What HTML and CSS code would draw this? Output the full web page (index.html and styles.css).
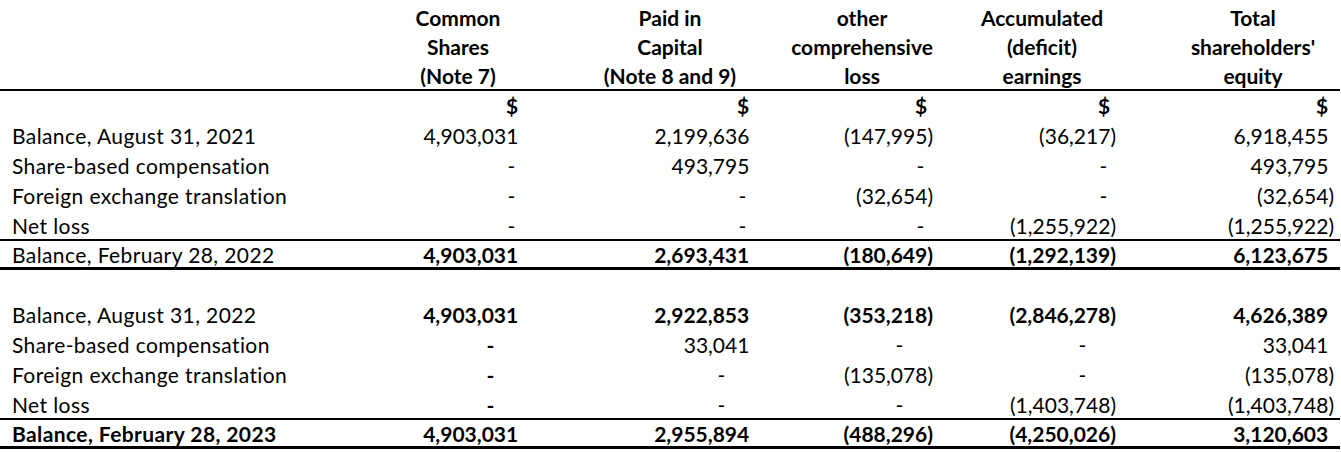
FILE: index.html
```html
<!DOCTYPE html>
<html>
<head>
<meta charset="utf-8">
<link rel="stylesheet" href="styles.css">
</head>
<body>
<div class="sheet">
  <div class="row head">
    <div class="c lab"></div>
    <div class="c c1">Common<br>Shares<br>(Note 7)</div>
    <div class="c c2">Paid in<br>Capital<br>(Note 8 and 9)</div>
    <div class="c c3">other<br>comprehensive<br>loss</div>
    <div class="c c4">Accumulated<br>(deficit)<br>earnings</div>
    <div class="c c5">Total<br>shareholders'<br>equity</div>
  </div>
  <div class="row cur b">
    <div class="c lab"></div>
    <div class="c c1 v">$<span class="p">)</span></div>
    <div class="c c2 v">$<span class="p">)</span></div>
    <div class="c c3 v">$<span class="p">)</span></div>
    <div class="c c4 v">$<span class="p">)</span></div>
    <div class="c c5 v">$<span class="p">)</span></div>
  </div>
  <div class="row">
    <div class="c lab">Balance, August 31, 2021</div>
    <div class="c c1 v">4,903,031<span class="p">)</span></div>
    <div class="c c2 v">2,199,636<span class="p">)</span></div>
    <div class="c c3 v">(147,995)</div>
    <div class="c c4 v">(36,217)</div>
    <div class="c c5 v">6,918,455<span class="p">)</span></div>
  </div>
  <div class="row">
    <div class="c lab">Share-based compensation</div>
    <div class="c c1 v"><span class="d1">-</span><span class="p">)</span></div>
    <div class="c c2 v">493,795<span class="p">)</span></div>
    <div class="c c3 v"><span class="d1">-</span><span class="p">)</span></div>
    <div class="c c4 v"><span class="d1">-</span><span class="p">)</span></div>
    <div class="c c5 v">493,795<span class="p">)</span></div>
  </div>
  <div class="row">
    <div class="c lab">Foreign exchange translation</div>
    <div class="c c1 v"><span class="d1">-</span><span class="p">)</span></div>
    <div class="c c2 v"><span class="d1">-</span><span class="p">)</span></div>
    <div class="c c3 v">(32,654)</div>
    <div class="c c4 v"><span class="d1">-</span><span class="p">)</span></div>
    <div class="c c5 v">(32,654)</div>
  </div>
  <div class="row pre">
    <div class="c lab">Net loss</div>
    <div class="c c1 v"><span class="d1">-</span><span class="p">)</span></div>
    <div class="c c2 v"><span class="d1">-</span><span class="p">)</span></div>
    <div class="c c3 v"><span class="d1">-</span><span class="p">)</span></div>
    <div class="c c4 v">(1,255,922)</div>
    <div class="c c5 v">(1,255,922)</div>
  </div>
  <div class="row total">
    <div class="c lab">Balance, February 28, 2022</div>
    <div class="c c1 v b">4,903,031<span class="p">)</span></div>
    <div class="c c2 v b">2,693,431<span class="p">)</span></div>
    <div class="c c3 v b">(180,649)</div>
    <div class="c c4 v b">(1,292,139)</div>
    <div class="c c5 v b">6,123,675<span class="p">)</span></div>
  </div>
  <div class="row blank"></div>
  <div class="row">
    <div class="c lab">Balance, August 31, 2022</div>
    <div class="c c1 v b">4,903,031<span class="p">)</span></div>
    <div class="c c2 v b">2,922,853<span class="p">)</span></div>
    <div class="c c3 v b">(353,218)</div>
    <div class="c c4 v b">(2,846,278)</div>
    <div class="c c5 v b">4,626,389<span class="p">)</span></div>
  </div>
  <div class="row">
    <div class="c lab">Share-based compensation</div>
    <div class="c c1 v b"><span class="d2">-</span><span class="p">)</span></div>
    <div class="c c2 v">33,041<span class="p">)</span></div>
    <div class="c c3 v"><span class="d2">-</span><span class="p">)</span></div>
    <div class="c c4 v"><span class="d2">-</span><span class="p">)</span></div>
    <div class="c c5 v">33,041<span class="p">)</span></div>
  </div>
  <div class="row">
    <div class="c lab">Foreign exchange translation</div>
    <div class="c c1 v b"><span class="d2">-</span><span class="p">)</span></div>
    <div class="c c2 v"><span class="d2">-</span><span class="p">)</span></div>
    <div class="c c3 v">(135,078)</div>
    <div class="c c4 v"><span class="d2">-</span><span class="p">)</span></div>
    <div class="c c5 v">(135,078)</div>
  </div>
  <div class="row pre">
    <div class="c lab">Net loss</div>
    <div class="c c1 v b"><span class="d2">-</span><span class="p">)</span></div>
    <div class="c c2 v"><span class="d2">-</span><span class="p">)</span></div>
    <div class="c c3 v"><span class="d2">-</span><span class="p">)</span></div>
    <div class="c c4 v">(1,403,748)</div>
    <div class="c c5 v">(1,403,748)</div>
  </div>
  <div class="row total">
    <div class="c lab b">Balance, February 28, 2023</div>
    <div class="c c1 v b">4,903,031<span class="p">)</span></div>
    <div class="c c2 v b">2,955,894<span class="p">)</span></div>
    <div class="c c3 v b">(488,296)</div>
    <div class="c c4 v b">(4,250,026)</div>
    <div class="c c5 v b">3,120,603<span class="p">)</span></div>
  </div>
</div>
</body>
</html>
```

FILE: styles.css
```css
html, body {
  margin: 0;
  padding: 0;
  background: #ffffff;
}
body {
  font-family: Lato, "Liberation Sans", sans-serif;
  font-size: 21px;
  color: #000000;
}
.sheet {
  width: 1340px;
}
.row {
  display: grid;
  grid-template-columns: 386px 144px 231px 178px 183px 218px;
  height: 30px;
  line-height: 30px;
}
.c {
  white-space: nowrap;
}
.lab {
  padding-left: 12px;
  letter-spacing: 0.4px;
}
.c2 { padding-left: 49px; }
.c3 { padding-left: 24px; }
.c4 { padding-left: 23px; }
.c5 { padding-left: 44px; }
.v {
  text-align: right;
  padding-right: 6px;
}
.p {
  visibility: hidden;
}
.d1 {
  margin-right: 3px;
}
.d2 {
  margin-right: 24px;
}
.b {
  font-weight: 700;
}
.head {
  height: 89px;
  line-height: 29px;
  font-weight: 700;
  border-bottom: 2px solid #000;
  align-items: start;
}
.head .c {
  text-align: center;
  padding-top: 3px;
}
.cur {
  height: 30px;
}
.pre {
  height: 28px;
  line-height: 30px;
}
.total {
  height: 26px;
  line-height: 28px;
  border-top: 2px solid #000;
  border-bottom: 3px solid #000;
}
.blank {
  height: 30px;
}
```
